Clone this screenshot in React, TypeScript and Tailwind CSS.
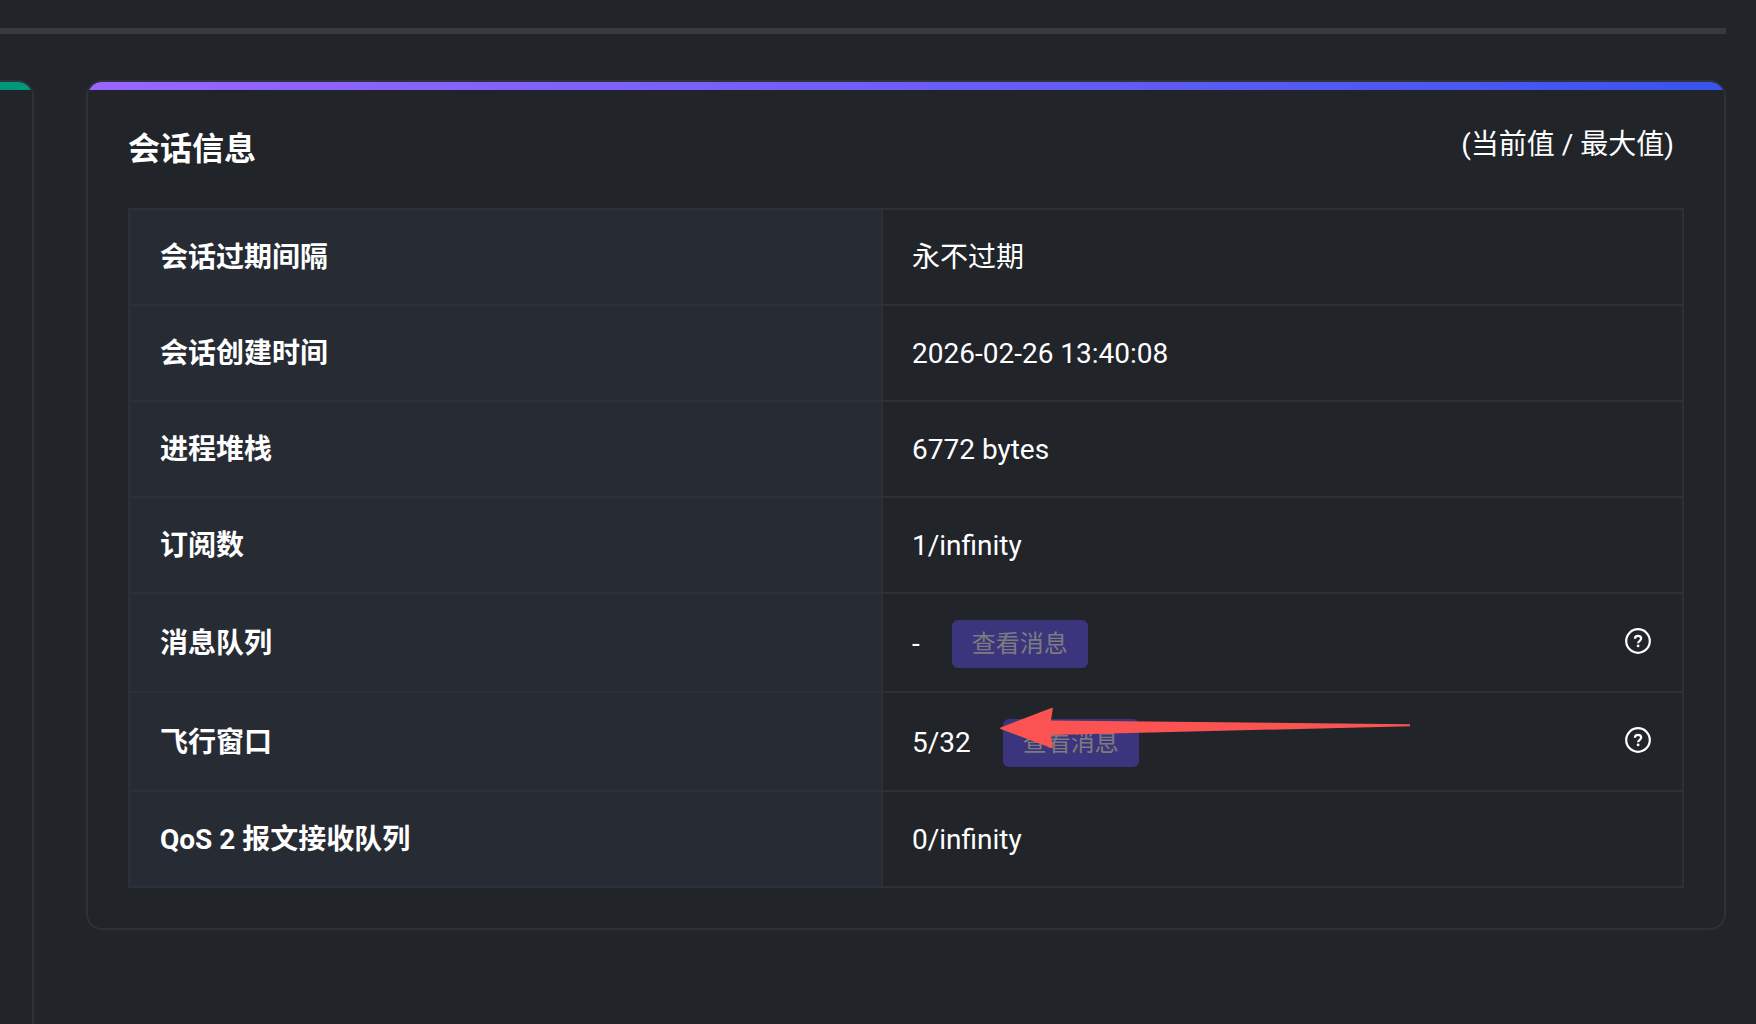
import type { ReactNode } from "react";

type Row = {
  label: string;
  value: string;
  action?: boolean;
};

const rows: Row[] = [
  { label: "会话过期间隔", value: "永不过期" },
  { label: "会话创建时间", value: "2026-02-26 13:40:08" },
  { label: "进程堆栈", value: "6772 bytes" },
  { label: "订阅数", value: "1/infinity" },
  { label: "消息队列", value: "-", action: true },
  { label: "飞行窗口", value: "5/32", action: true },
  { label: "QoS 2 报文接收队列", value: "0/infinity" },
];

const HelpIcon = () => (
  <svg viewBox="0 0 28 28" className="size-7" fill="none" stroke="currentColor">
    <circle cx="14" cy="14" r="11.8" strokeWidth="2.2" />
    <path
      d="M10.9 11.8c0-1.900 1.300-3 3.100-3s3.200 1.100 3.200 2.800c0 2.200-3.100 2.200-3.100 4.700"
      strokeWidth="2.2"
    />
    <circle cx="14.1" cy="18.9" r="1.4" fill="currentColor" stroke="none" />
  </svg>
);

// Points at the in-flight window count
const Arrow = () => (
  <svg
    viewBox="0 0 412 42"
    className="absolute -left-1 -top-3 h-[42px] w-[412px] max-w-none pointer-events-none"
    fill="#fb5352"
  >
    <path d="M1.5 20.5 53 .8q1 0 .8 1L52 13.5l359 3.7v2L52 28l1.8 12.2q.2 1-.8 1L1.5 22q-1-.7 0-1.500Z" />
  </svg>
);

const ViewButton = ({ children }: { children?: ReactNode }) => (
  <div className="relative">
    <button
      type="button"
      disabled
      className="block h-12 rounded-md bg-[#3a357c] px-5 text-2xl leading-8 text-[#7c7c80]"
    >
      查看消息
    </button>
    {children}
  </div>
);

const SessionCard = () => (
  <section className="flex-1 self-start overflow-hidden rounded-2xl border-2 border-[#2e3136]">
    <div className="h-2 bg-gradient-to-r from-[#9965ff] to-[#3853ee]" />
    <div className="px-10 pb-10 pt-8">
      {/* Header */}
      <div className="mb-8 flex items-start justify-between pr-2.5">
        <h2 className="text-[32px] font-bold leading-[54px]">会话信息</h2>
        <span className="text-[28px] leading-[46px]">(当前值 / 最大值)</span>
      </div>

      <table className="w-full table-fixed border-collapse text-left text-[28px] leading-10">
        <colgroup>
          <col className="w-[753px]" />
          <col />
        </colgroup>
        <tbody>
          {rows.map((row) => (
            <tr key={row.label} className={row.action ? "h-[99px]" : "h-24"}>
              <th
                scope="row"
                className="border-2 border-[#2d3039] bg-[#272b33] px-[30px] pt-0.5 font-bold"
              >
                {row.label}
              </th>
              <td className="border-2 border-[#2d3039] px-[29px] pt-0.5">
                <div className="flex items-center gap-8 pr-px">
                  <span>{row.value}</span>
                  {row.action && (
                    <>
                      <ViewButton>{row.value === "5/32" && <Arrow />}</ViewButton>
                      <button type="button" aria-label="帮助" className="ml-auto pb-1.5">
                        <HelpIcon />
                      </button>
                    </>
                  )}
                </div>
              </td>
            </tr>
          ))}
        </tbody>
      </table>
    </div>
  </section>
);

export default function App() {
  return (
    <main className="flex min-h-screen flex-col bg-[#212429] pr-[30px] pt-7 font-['Roboto','Noto_Sans_CJK_SC',sans-serif] text-white">
      <div className="h-1.5 bg-[#36393e]" />
      <div className="mt-[46px] flex flex-1 gap-[52px]">
        {/* Right edge of the neighbouring card */}
        <section className="w-[34px] overflow-hidden rounded-tr-2xl border-r-2 border-t-2 border-[#2e3136]">
          <div className="h-2 bg-[#00977d]" />
        </section>
        <SessionCard />
      </div>
    </main>
  );
}
